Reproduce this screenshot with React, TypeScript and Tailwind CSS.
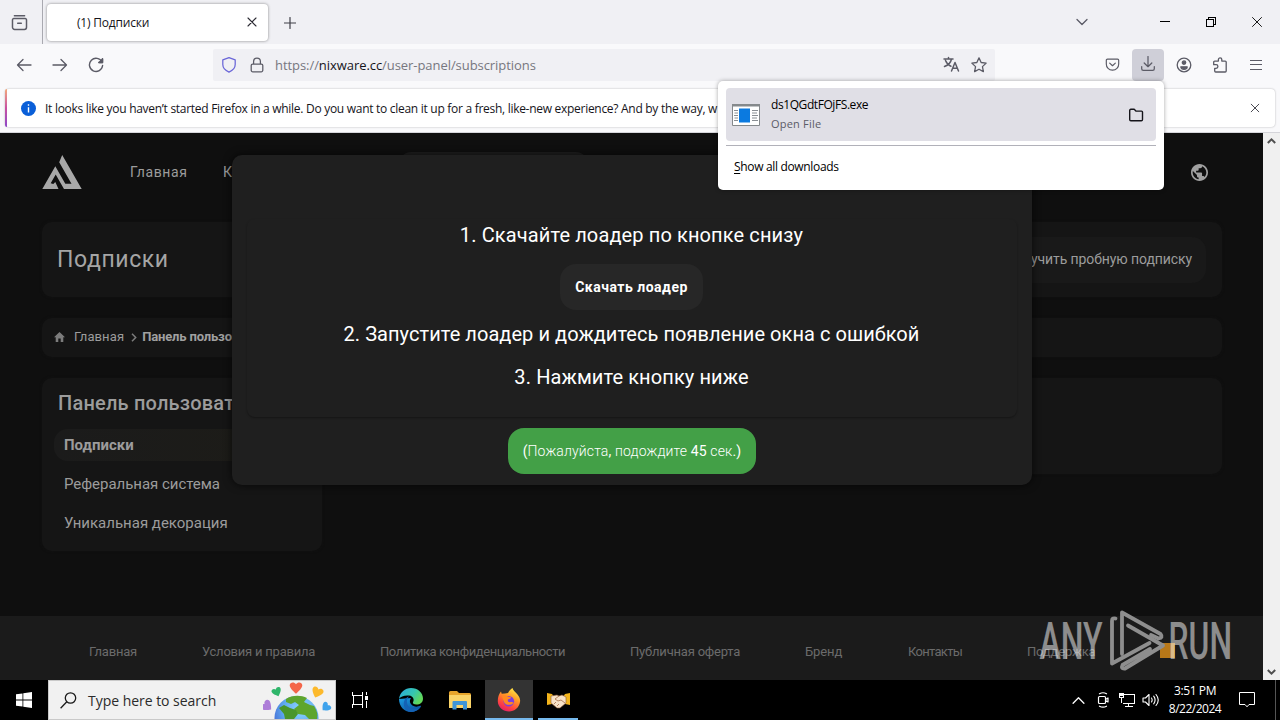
import React from "react";

type IconProps = { className?: string; children: React.ReactNode; size?: number; box?: string; sw?: number };

function Icon({ className = "", children, size = 16, box = "0 0 16 16", sw = 1.25 }: IconProps) {
  return (
    <svg
      width={size}
      height={size}
      viewBox={box}
      fill="none"
      stroke="currentColor"
      strokeWidth={sw}
      strokeLinecap="round"
      strokeLinejoin="round"
      className={`shrink-0 ${className}`}
    >
      {children}
    </svg>
  );
}

function TabStrip() {
  return (
    <div className="flex h-[44px] items-center bg-[#f0f0f4] text-[#3f3f47]">
      <div className="flex h-full w-[43px] items-center justify-center border-r border-[#a9a9b0] pr-[4px]">
        <Icon className="ml-px text-[#5b5b66]" size={17} sw={1.4}>
          <path d="M3.2 1.6h9.6M2.6 4.3h10.8a1.2 1.2 0 0 1 1.2 1.2v7a2 2 0 0 1-2 2H3.4a2 2 0 0 1-2-2v-7a1.2 1.2 0 0 1 1.2-1.2zM6.3 8.8h3.4" />
        </Icon>
      </div>
      <div className="ml-[4px] flex h-[37px] w-[221px] items-center rounded-[4px] bg-white pl-[30px] pr-[11px] shadow-[0_0_3px_rgba(0,0,0,0.45)]">
        <span className="pt-[2px] text-[12px] tracking-[-0.2px] text-[#15141a]">(1) Подписки</span>
        <Icon className="ml-auto text-[#2b2a33]" size={10} box="0 0 10 10" sw={1.1}>
          <path d="M1 1l8 8M9 1l-8 8" />
        </Icon>
      </div>
      <Icon className="ml-[16px] mt-px" size={12} box="0 0 12 12" sw={1.2}>
        <path d="M6 0.5v11M0.5 6h11" />
      </Icon>
      <div className="ml-auto flex items-center text-black">
        <Icon className="mr-[72px] text-[#5b5b66]" size={12} box="0 0 12 12" sw={1.3}>
          <path d="M1 3.5l5 5 5-5" />
        </Icon>
        <svg width="10" height="10" className="mr-[36px]" stroke="currentColor" fill="none" shapeRendering="crispEdges">
          <path d="M0 4.5h10" />
        </svg>
        <svg width="10" height="10" className="mr-[36px]" stroke="currentColor" fill="none" shapeRendering="crispEdges">
          <path d="M0.5 2.5h7v7h-7zM2.5 2.5v-2h7v7h-2" />
        </svg>
        <Icon className="mr-[18px]" size={10} box="0 0 10 10" sw={0.9}>
          <path d="M0.5 0.5l9 9M9.5 0.5l-9 9" />
        </Icon>
      </div>
    </div>
  );
}

function NavBar() {
  return (
    <div className="flex h-[41px] items-center bg-[#f9f9fb] text-[#5b5b66]">
      <Icon className="ml-[16px]" sw={1.3}>
        <path d="M15 8H1.5M7 2.5L1.5 8 7 13.5" />
      </Icon>
      <Icon className="ml-[20px]" sw={1.3}>
        <path d="M1 8h13.5M9 2.5L14.5 8 9 13.5" />
      </Icon>
      <Icon className="ml-[20px]" sw={1.4}>
        <path d="M14 5A6.6 6.6 0 1 0 14.6 8.5M14.5 1.8V5.5H10.8" />
        <path d="M14.5 2v3.5H11z" fill="currentColor" />
      </Icon>
      <div className="ml-[109px] flex h-[32px] w-[782px] items-center rounded-[2px] bg-[#f0f0f4] pl-[8px] pr-[8px]">
        <Icon className="text-[#6a66d8]">
          <path d="M8 .6l6.2 2.2v4.8c0 3.4-2.6 6-6.2 7.5C4.4 13.6 1.8 11 1.8 7.6V2.8z" />
        </Icon>
        <Icon className="ml-[12px]">
          <path d="M3.6 7.2h8.8a1.4 1.4 0 0 1 1.4 1.4v4.6a1.6 1.6 0 0 1-1.6 1.6H3.8a1.6 1.6 0 0 1-1.6-1.6V8.6a1.4 1.4 0 0 1 1.4-1.4zM4.6 7V4.4a3.4 3.4 0 0 1 6.8 0V7" />
        </Icon>
        <span className="ml-[10px] pt-[2px] text-[13px] tracking-[-0.06px] text-[#77777f]">
          https://<span className="text-[#15141a]">nixware.cc</span>/user-panel/subscriptions
        </span>
        <Icon className="ml-auto" size={17} box="0 0 17 16" sw={1.5}>
          <path d="M1 2.5h9M5.5 1v1.5M8.5 2.5c-.6 3-3 6-7 7.5M2.5 4c1 2.5 3.5 5 5.5 5.8M8.5 14.5L12 6l3.5 8.5M9.7 11.8h4.6" />
        </Icon>
        <Icon className="ml-[11px]" sw={1.3}>
          <path d="M8 .9l2.15 4.6 5 .65-3.7 3.5.95 5L8 12.2l-4.4 2.45.95-5-3.7-3.5 5-.65z" />
        </Icon>
      </div>
      <div className="ml-auto flex items-center">
        <Icon className="mr-[12px]" size={15}>
          <path d="M2.6 2.2h10.8a1.2 1.2 0 0 1 1.2 1.2v4A6.4 6.4 0 0 1 8 14 6.4 6.4 0 0 1 1.4 7.4v-4a1.2 1.2 0 0 1 1.2-1.2zM5 6.5l3 2.8 3-2.8" />
        </Icon>
        <div className="mr-[12px] flex h-[32px] w-[32px] items-center justify-center rounded-[4px] bg-[#cfcfd8]">
          <Icon className="mt-[-1px]">
            <path d="M8 .5v10M4.2 7L8 10.7 11.8 7M1.7 10.5v2.3a1.6 1.6 0 0 0 1.6 1.6h9.4a1.6 1.6 0 0 0 1.6-1.6v-2.3" />
          </Icon>
        </div>
        <Icon className="mr-[20px]" sw={1.3}>
          <circle cx="8" cy="8" r="6.8" />
          <circle cx="8" cy="5.6" r="1.7" fill="currentColor" />
          <path d="M4.8 9.8h6.4c0 1.6-1.4 2.5-3.2 2.5S4.8 11.4 4.8 9.8z" fill="currentColor" />
        </Icon>
        <Icon className="mr-[22px]" sw={1.3}>
          <path d="M2.7 4.1h3.7V2.6a1.7 1.7 0 0 1 3.4 0v1.5h3.4a1 1 0 0 1 1 1v8.9a1 1 0 0 1-1 1H3.7a1 1 0 0 1-1-1v-2.7h1.4a1.8 1.8 0 0 0 0-3.6H1.7V5.1a1 1 0 0 1 1-1" />
        </Icon>
        <svg width="12" height="12" className="mr-[18px]" stroke="currentColor" strokeWidth="1" shapeRendering="crispEdges">
          <path d="M0 1.5h12M0 5.5h12M0 10.5h12" />
        </svg>
      </div>
    </div>
  );
}

function InfoBar() {
  return (
    <div className="flex h-[48px] items-start border-b border-[#d5d5da] bg-[#f9f9fb] pl-[5px] pr-[5px] pt-[4px]">
      <div className="flex h-[38px] flex-1 items-center rounded-[4px] bg-white shadow-[0_0_2px_rgba(0,0,0,0.3)]">
        <div className="h-full w-[2px] rounded-l bg-linear-to-b from-[#f2a878] via-[#c94fa0] to-[#8d45c8]" />
        <svg width="15" height="15" viewBox="0 0 15 15" className="ml-[14px] shrink-0">
          <circle cx="7.5" cy="7.5" r="7.5" fill="#0a5fd8" />
          <path d="M7.5 3.2v1.6M7.5 6.3v5.2" stroke="#fff" strokeWidth="1.4" />
        </svg>
        <span className="ml-[9px] whitespace-nowrap pt-[2px] text-[12px] tracking-[-0.285px] text-[#15141a]">
          It looks like you haven’t started Firefox in a while. Do you want to clean it up for a fresh, like-new experience? And by the way, w
        </span>
        <Icon className="ml-auto mr-[15px] text-[#4a4a52]" size={10} box="0 0 10 10" sw={1}>
          <path d="M1.2 1.2l7.6 7.6M8.8 1.2L1.2 8.8" />
        </Icon>
      </div>
    </div>
  );
}

function DownloadsPanel() {
  return (
    <div className="absolute left-[718px] top-[81px] flex h-[109px] w-[446px] flex-col rounded-[5px] bg-white px-[8px] pt-[7px] shadow-[0_0_4px_rgba(0,0,0,0.35)]">
      <div className="flex h-[53px] items-center rounded-[4px] bg-[#e0dfe6] pl-[6px] pr-[12px]">
        <svg width="28" height="22" viewBox="0 0 28 22" className="shrink-0">
          <path d="M.5.5h27v21H.5z" fill="#fff" stroke="#85898c" />
          <path d="M0 0h28v2.5H0z" fill="#85898c" />
          <path d="M7 4.5h11v14H7z" fill="#0b7ae0" />
          <path d="M2 6.5h4M2.5 9h3.5M2 11.5h4M2.5 14h3.5M2 16.5h4M20 6.5h6M20 9h5M20 11.5h6M20 14h5M20 16.5h6" stroke="#8a8f94" />
        </svg>
        <div className="ml-[11px] flex flex-col whitespace-nowrap pb-px">
          <span className="text-[12px] leading-[19px] tracking-[-0.42px] text-black">ds1QGdtFOjFS.exe</span>
          <span className="text-[11px] leading-[19px] tracking-[0.2px] text-[#5b5b66]">Open File</span>
        </div>
        <Icon className="ml-auto text-[#15141a]" sw={1.4}>
          <path d="M2.8 2.3h3.4l1.7 1.8h5.6a1 1 0 0 1 1 1v7.4a1.2 1.2 0 0 1-1.2 1.2H2.9a1.2 1.2 0 0 1-1.2-1.2V3.4a1.1 1.1 0 0 1 1.1-1.1z" />
        </Icon>
      </div>
      <div className="mt-[4px] h-px bg-[#b1b1b9]" />
      <div className="mt-[12px] pl-[8px] text-[12px] leading-[18px] tracking-[-0.33px] text-black">
        <span className="underline underline-offset-2">S</span>how all downloads
      </div>
    </div>
  );
}

const footerLinks = [
  { label: "Главная", cls: "ml-[89px] w-[113px] tracking-[-0.2px]" },
  { label: "Условия и правила", cls: "w-[178px] tracking-[-0.22px]" },
  { label: "Политика конфиденциальности", cls: "w-[250px] tracking-[-0.4px]" },
  { label: "Публичная оферта", cls: "w-[175px] tracking-[-0.2px]" },
  { label: "Бренд", cls: "w-[103px] tracking-[-0.1px]" },
  { label: "Контакты", cls: "w-[119px] tracking-[-0.7px]" },
  { label: "Поддержка", cls: "w-[90px] tracking-[-0.2px]" },
];

function SitePage() {
  return (
    <div className="flex h-full flex-1 flex-col bg-[#0f0f0f] text-[#9c9c9c]">
      <div className="ml-[42px] flex w-[1180px] flex-1 flex-col">
        <header className="flex h-[89px] items-start">
          <svg width="40" height="34" viewBox="0 0 40 34" className="mt-[22px] shrink-0" fill="#a8a8a8">
            <path d="M20.2 0L39.7 34H22L13.7 19.5 8.7 28.3 11.3 29 13.3 27 16.5 34H.3L13.3 11.3 23.3 28.8H29.5L17.2 7.3z" />
          </svg>
          <span className="ml-[48px] mt-[29px] w-[93px] text-[14px] leading-[20px] tracking-[0.6px]">Главная</span>
          <span className="mt-[29px] w-[176px] text-[14px] leading-[20px]">Комьюнити</span>
          <div className="mt-[19px] h-[40px] w-[189px] rounded-[12px] bg-[#1e1e1e]" />
          <svg width="17" height="17" viewBox="2 2 20 20" className="ml-auto mr-[14px] mt-[31px]" fill="#a0a0a0">
            <path d="M12 2C6.48 2 2 6.48 2 12s4.48 10 10 10 10-4.48 10-10S17.52 2 12 2zm-1 17.93c-3.95-.49-7-3.85-7-7.93 0-.62.08-1.21.21-1.79L9 15v1c0 1.1.9 2 2 2v1.93zm6.9-2.54c-.26-.81-1-1.39-1.9-1.39h-1v-3c0-.55-.45-1-1-1H8v-2h2c.55 0 1-.45 1-1V7h2c1.1 0 2-.9 2-2v-.41c2.93 1.19 5 4.06 5 7.41 0 2.08-.8 3.97-2.1 5.39z" />
          </svg>
        </header>
        <div className="flex h-[75px] items-center justify-between rounded-[10px] bg-[#151515] pl-[15px] pr-[16px] shadow-[0_0_3px_#121212]">
          <span className="pt-[2px] text-[23px] tracking-[0.6px] text-[#a5a5a5]">Подписки</span>
          <div className="flex h-[46px] items-center rounded-[14px] bg-[#191919] px-[14px] text-[14px] tracking-[-0.09px]">
            Получить пробную подписку
          </div>
        </div>
        <div className="mt-[21px] flex h-[39px] items-center rounded-[10px] bg-[#151515] pb-[2px] pl-[12px] text-[13px] shadow-[0_0_3px_#121212]">
          <svg width="11" height="10" viewBox="0 0 11 10" fill="#7c7c7c" className="shrink-0">
            <path d="M5.5 0L11 5.2H9.3V10H6.7V6.5H4.3V10H1.7V5.2H0z" />
          </svg>
          <span className="ml-[9px] tracking-[0.1px]">Главная</span>
          <svg width="6" height="9" viewBox="0 0 6 9" fill="none" stroke="#7c7c7c" strokeWidth="1.5" className="ml-[7px] mr-[5px] mt-px">
            <path d="M1 .8l3.7 3.7L1 8.2" />
          </svg>
          <span className="font-bold tracking-[-0.15px] text-[#a0a0a0]">Панель пользователя</span>
        </div>
        <div className="mt-[21px] flex items-start gap-[20px]">
          <aside className="flex h-[173px] w-[280px] flex-col rounded-[10px] bg-[#151515] px-[12px] shadow-[0_0_3px_#121212]">
            <div className="mt-[13px] pl-[4px] text-[20px] font-medium leading-[24px] tracking-[0.2px]">Панель пользователя</div>
            <div className="mt-[14px] flex h-[32px] items-center rounded-[14px] bg-linear-to-r from-[#1b1b1b] to-[#1d1c17] pl-[10px] text-[15px] font-bold">
              Подписки
            </div>
            <div className="mt-[7px] flex h-[32px] items-center pl-[10px] text-[15px] tracking-[-0.03px]">Реферальная система</div>
            <div className="mt-[7px] flex h-[32px] items-center pl-[10px] text-[15px]">Уникальная декорация</div>
          </aside>
          <div className="h-[96px] flex-1 rounded-[10px] bg-[#151515] shadow-[0_0_3px_#121212]" />
        </div>
      </div>
      <footer className="flex h-[64px] items-center whitespace-nowrap bg-[#1b1b1b] pt-[7px] text-[13px] text-[#6b6b6b]">
        {footerLinks.map((l) => (
          <span key={l.label} className={l.cls}>
            {l.label}
          </span>
        ))}
      </footer>
    </div>
  );
}

function Modal() {
  return (
    <div className="absolute left-[232px] top-[22px] flex h-[330px] w-[800px] flex-col items-center rounded-[10px] bg-[#1f1f1f] text-white shadow-[0_0_8px_rgba(0,0,0,0.7)]">
      <div className="mt-[64px] flex h-[198px] w-[770px] flex-col items-center rounded-[8px] text-[20px] shadow-[0_1px_2px_rgba(0,0,0,0.35)]">
        <p className="mr-px mt-[4px] leading-[24px] tracking-[0.12px]">1. Скачайте лоадер по кнопке снизу</p>
        <div className="mr-px mt-[17px] flex h-[46px] w-[143px] items-center justify-center rounded-[16px] bg-[#272727] text-[14px] font-bold tracking-[0.5px]">
          Скачать лоадер
        </div>
        <p className="mr-px mt-[12px] leading-[24px] tracking-[0.05px]">2. Запустите лоадер и дождитесь появление окна с ошибкой</p>
        <p className="mr-px mt-[19px] leading-[24px] tracking-[0.1px]">3. Нажмите кнопку ниже</p>
      </div>
      <div className="mt-[11px] flex h-[46px] w-[248px] items-center justify-center rounded-[16px] bg-[#43a047] text-[14px]">
        <span className="whitespace-nowrap font-light tracking-[0.14px]">
          <b>(</b>Пожалуйста<b>,</b> подождите <b>45</b> сек<b>.)</b>
        </span>
      </div>
    </div>
  );
}

function Scrollbar() {
  return (
    <div className="flex h-full w-[17px] flex-col items-center justify-between bg-[#f0f0f0] py-[4px] text-[#505050]">
      <svg width="9" height="8" viewBox="0 0 9 8" fill="none" stroke="currentColor" strokeWidth="2">
        <path d="M.8 6L4.5 2.3 8.2 6" />
      </svg>
      <svg width="9" height="8" viewBox="0 0 9 8" fill="none" stroke="currentColor" strokeWidth="2">
        <path d="M.8 2L4.5 5.7 8.2 2" />
      </svg>
    </div>
  );
}

function Watermark() {
  return (
    <svg width="220" height="72" viewBox="1030 605 220 72" className="absolute left-[1030px] top-[605px]">
      <rect x="1160" y="643" width="15" height="15" fill="#b87818" />
      <g fill="#ffffff" fillOpacity="0.5" fontFamily="Roboto" fontSize="52" fontWeight="500">
        <text x="1039.5" y="659" textLength="63" lengthAdjust="spacingAndGlyphs">ANY</text>
        <text x="1168.5" y="659" textLength="63.5" lengthAdjust="spacingAndGlyphs">RUN</text>
      </g>
      <g fill="none" stroke="#8e8e8e" strokeWidth="3.8" strokeLinejoin="round" strokeLinecap="round">
        <path d="M1115.5 618.5Q1112 617.5 1112 621V663.5L1149.5 643" />
        <path d="M1122 654V612.5L1160.5 634Q1163.5 637.5 1158.5 638.5L1151 635" />
        <path d="M1128 625.5L1163 645.5 1125 668.5Q1120.5 669 1122.5 665L1150 649" />
      </g>
    </svg>
  );
}

function Heart({ x, y, s, r, fill }: { x: number; y: number; s: number; r: number; fill: string }) {
  return (
    <path
      transform={`translate(${x} ${y}) rotate(${r}) scale(${s})`}
      d="M0 5C-3 2.5-6-.5-6-3c0-3 4.2-4 6-1 1.8-3 6-2 6 1 0 2.5-3 5.5-6 8z"
      fill={fill}
    />
  );
}

function Taskbar() {
  return (
    <div className="flex h-[40px] items-center bg-black text-white">
      <div className="flex w-[48px] justify-center">
        <svg width="16" height="16" viewBox="0 0 16 16" fill="#fff">
          <path d="M0 2.3L6.5 1.4V7.6H0zM7.3 1.3L16 0V7.6H7.3zM0 8.4H6.5V14.6L0 13.7zM7.3 8.4H16V16L7.3 14.7z" />
        </svg>
      </div>
      <div className="flex h-full w-[288px] items-center border border-[#c9c9c9] bg-[#f1f1f1] pl-[11px] text-[#2b2b2b]">
        <svg width="17" height="17" viewBox="0 0 17 17" fill="none" stroke="#1a1a1a" strokeWidth="1.3">
          <circle cx="10.5" cy="6" r="5.2" />
          <path d="M6.8 9.8L.6 16.2" />
        </svg>
        <span className="ml-[11px] whitespace-nowrap text-[14px] tracking-[-0.03px]">Type here to search</span>
        <svg width="72" height="38" viewBox="262 681 72 38" className="ml-auto">
          <defs>
            <radialGradient id="sea" cx="0.6" cy="0.3" r="0.8">
              <stop offset="0" stopColor="#8fd6ff" />
              <stop offset="0.5" stopColor="#5fa9f0" />
              <stop offset="1" stopColor="#3a52c8" />
            </radialGradient>
          </defs>
          <circle cx="295.5" cy="718" r="22" fill="url(#sea)" />
          <path d="M285 699c6-4 15-4 21-1l-3 4 6 3 4 1c3 5 4 8 3 13h-8l-4-4-7-1-4-5 5-4-4-3-4 2-5-2z" fill="#5ea52e" />
          <path d="M278 708l5-3 6 3 6 2 2 4-4 5h-9l-1-5z" fill="#4a962b" />
          <Heart x={295} y={688.5} s={1.05} r={0} fill="#f4664a" />
          <Heart x={276} y={692.5} s={0.8} r={-22} fill="#2fb56a" />
          <Heart x={316} y={693} s={0.95} r={22} fill="#fcb92c" />
          <Heart x={266.5} y={706.5} s={0.95} r={-50} fill="#ad7dd8" />
          <Heart x={324.5} y={707.5} s={0.8} r={45} fill="#3fa3ec" />
        </svg>
      </div>
      <div className="flex w-[50px] justify-center">
        <svg width="18" height="16" viewBox="0 0 18 16" fill="none" stroke="#fff" strokeWidth="1" shapeRendering="crispEdges" className="mr-[3px]">
          <path d="M1.5 0v3.5h10V0M1.5 16v-3.5h10V16M2.5 3.5v9M11.5 3.5v9M15.5 0v3M15.5 9v7" />
          <path d="M14 4h3v4h-3z" fill="#fff" stroke="none" />
        </svg>
      </div>
      <div className="flex w-[49px] justify-center">
        <svg width="24" height="24" viewBox="0 0 24 24">
          <defs>
            <linearGradient id="ea" x1="0" y1="0" x2="1" y2="0.5">
              <stop offset="0" stopColor="#2ba7e0" />
              <stop offset="0.6" stopColor="#35c5b0" />
              <stop offset="1" stopColor="#62d85a" />
            </linearGradient>
            <linearGradient id="eb" x1="0" y1="0" x2="0.8" y2="1">
              <stop offset="0" stopColor="#1b9de2" />
              <stop offset="1" stopColor="#0b4f9e" />
            </linearGradient>
          </defs>
          <path d="M0 11C0 18 5 24 12 24c4.5 0 8-2.3 10-5.5.3-.6-.2-1-.8-.7-2 .9-4.5 1.2-6.5.3C11 16.5 9.8 13 12 10z" fill="url(#eb)" />
          <path d="M0 11C1 4 6 0 12 0c7 0 12 5 12 10.5 0 4-3 6-6.5 6-3 0-4-1.2-3.5-2.3 1.5-2.2.5-6.2-4-6.7C5.5 7 1.5 8.5 0 11z" fill="url(#ea)" />
          <path d="M10 8.5C6 12 8 20 14 20.8c3 .4 5.5-.3 7.2-1.5C19 22.5 15.5 24 12 24 4.5 24 1.5 11 10 8.5z" fill="#1462b4" />
        </svg>
      </div>
      <div className="flex w-[50px] justify-center">
        <svg width="22" height="19" viewBox="0 0 22 19">
          <path d="M0 1.5Q0 0 1.5 0H8l2 2h10.5Q22 2 22 3.5V17H0z" fill="#e8a52b" />
          <path d="M0 4h22v13H0z" fill="#fbd468" />
          <path d="M3.5 18.5V11Q3.5 10 4.5 10h12.5Q18 10 18 11v7.5h-4V14H7.5v4.5z" fill="#3f95d6" />
        </svg>
      </div>
      <div className="flex h-full w-[48px] flex-col items-center bg-[#333] pt-[8px]">
        <svg width="24" height="24" viewBox="0 0 24 24">
          <defs>
            <linearGradient id="fx" x1="0.8" y1="0" x2="0.3" y2="1">
              <stop offset="0" stopColor="#fff04a" />
              <stop offset="0.4" stopColor="#ff9a26" />
              <stop offset="0.75" stopColor="#ff4440" />
              <stop offset="1" stopColor="#e51f68" />
            </linearGradient>
          </defs>
          <path d="M15.5 0c.5 2.5 3 4 5 6.5C22.5 9 23.5 11 23 14c-.8 5.5-5.5 9.5-11 9.5S1 19.5.8 13.5C.7 9.5 1.8 6 4 3.5l.7 2.3L8 5.5l3-.5c1-2 2.5-4 4.5-5z" fill="url(#fx)" />
          <circle cx="11.8" cy="13.2" r="5.3" fill="#7a3ee0" />
          <path d="M5 8.5c2-1.5 4.5-1 6 .2l3 .5c0 1.5-2 1.6-3 2.3-.8 1.5.5 3 2.5 2.6 1.3-.3 2.5.2 3 .8-2 2.5-8 3-9.5-1z" fill="#ff8a20" />
        </svg>
        <div className="mt-auto h-[2px] w-full bg-[#76b9ed]" />
      </div>
      <div className="ml-[5px] flex h-full w-[40px] flex-col items-center pt-[12px]">
        <svg width="23" height="17" viewBox="0 0 23 17">
          <path d="M0 1l5 1 2 3-2 7-5 1zM23 1l-5 1-2 3 2 7 5 1z" fill="#f3b41b" />
          <path d="M4 4l6-1 2 1 3-1 4 2v6l-6 5h-3L4 11z" fill="#f7e2c8" stroke="#8b5a34" strokeWidth="0.6" />
          <path d="M12 4L8 7l3 2 3-1 4 3M7 12l2-2M10 14l2-2" fill="none" stroke="#a56d45" strokeWidth="0.8" />
        </svg>
        <div className="mt-auto h-[2px] w-full bg-[#76b9ed]" />
      </div>
      <div className="ml-auto flex items-center">
        <Icon className="mr-[10px]" size={13} box="0 0 12 12" sw={1.2}>
          <path d="M1 8.5L6 3.5l5 5" />
        </Icon>
        <Icon className="mr-[7px]" size={16} box="0 0 15 16" sw={1.2}>
          <path d="M4 4.5h5a1 1 0 0 1 1 1v5a1 1 0 0 1-1 1H4a1 1 0 0 1-1-1v-5a1 1 0 0 1 1-1zM10 7.5l2.500-1.500v4L10 8.500M4 1.800Q7.500-.3 11 1.800M4 14.200q3.500 2 7 0" />
        </Icon>
        <svg width="17" height="14" viewBox="0 0 17 14" fill="none" stroke="#fff" shapeRendering="crispEdges" className="mr-[7px]">
          <path d="M6 1.5h10.5v8.5H5M10.5 10v3.5M6.5 13.5h8M1 .5h4v4h-4zM3 4.5V10" />
          <path d="M2 1h2v1H2z" fill="#fff" />
        </svg>
        <Icon className="mr-[8px]" size={18} box="0 0 18 14" sw={1.1}>
          <path d="M1 5h2.5L7 1.5v11L3.5 9H1zM9.5 5q1.3 2 0 4M11.7 3.2q2.8 3.8 0 7.6M14 1.5q4.5 5.5 0 11" />
        </Icon>
        <div className="flex w-[54px] flex-col items-center whitespace-nowrap text-[12px] leading-[18px]">
          <span className="tracking-[-0.4px]">3:51 PM</span>
          <span className="tracking-[-0.5px]">8/22/2024</span>
        </div>
        <svg width="16" height="16" viewBox="0 0 16 16" fill="none" stroke="#fff" className="ml-[17px]">
          <path d="M.5.5h15v12H10l-2 2.3L6 12.5H.5z" />
        </svg>
        <div className="ml-[20px] mr-[4px] h-[40px] w-px bg-[#555]" />
      </div>
    </div>
  );
}

export default function App() {
  return (
    <div className="relative flex h-[720px] w-[1280px] flex-col overflow-hidden font-['Open_Sans','Noto_Sans',sans-serif]">
      <TabStrip />
      <NavBar />
      <InfoBar />
      <div className="relative flex h-[547px] font-[Roboto,sans-serif]">
        <SitePage />
        <Scrollbar />
        <Modal />
      </div>
      <Taskbar />
      <DownloadsPanel />
      <Watermark />
    </div>
  );
}
